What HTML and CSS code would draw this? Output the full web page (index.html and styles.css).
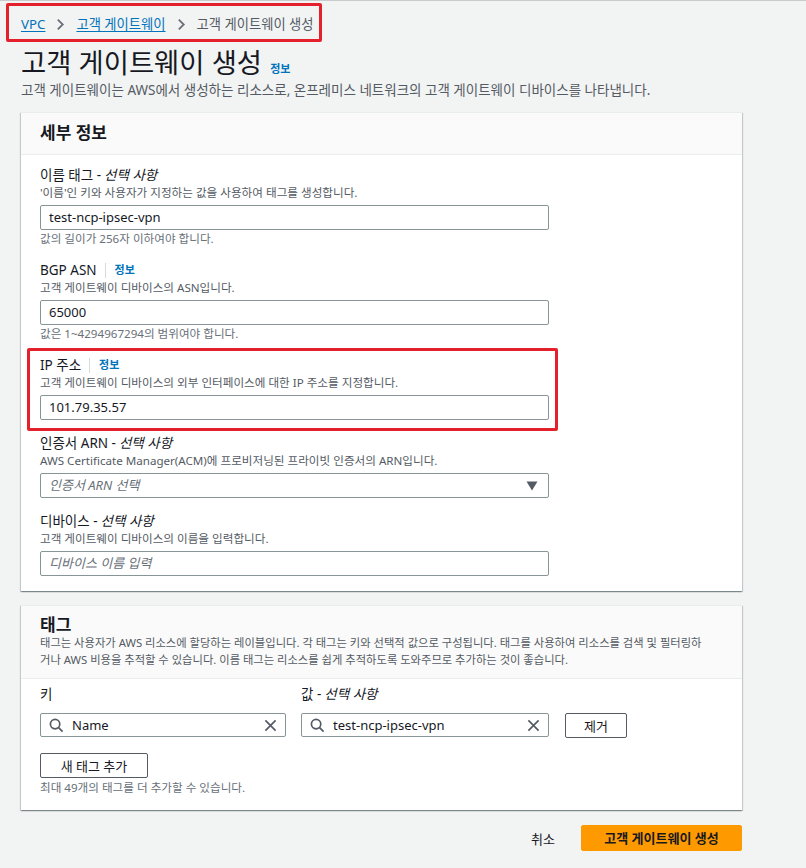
FILE: index.html
```html
<!DOCTYPE html>
<html lang="ko">
<head>
<meta charset="utf-8">
<title>고객 게이트웨이 생성</title>
<link rel="stylesheet" href="styles.css">
</head>
<body>
<div class="page">
  <nav class="crumbs">
    <a class="crumb-link" href="#">VPC</a>
    <svg class="chev" viewBox="0 0 10 14" width="9" height="13"><path d="M2 1.5 L7.5 7 L2 12.5" fill="none" stroke="#687078" stroke-width="2"/></svg>
    <a class="crumb-link" href="#">고객 게이트웨이</a>
    <svg class="chev" viewBox="0 0 10 14" width="9" height="13"><path d="M2 1.5 L7.5 7 L2 12.5" fill="none" stroke="#687078" stroke-width="2"/></svg>
    <span class="crumb-current">고객 게이트웨이 생성</span>
  </nav>

  <h1 class="title">고객 게이트웨이 생성 <a class="info" href="#">정보</a></h1>
  <p class="lead">고객 게이트웨이는 AWS에서 생성하는 리소스로, 온프레미스 네트워크의 고객 게이트웨이 디바이스를 나타냅니다.</p>

  <section class="panel">
    <div class="panel-head">
      <h2 class="panel-title">세부 정보</h2>
    </div>
    <div class="panel-body details">
      <div class="field">
        <div class="label">이름 태그 - <i>선택 사항</i></div>
        <div class="desc">'이름'인 키와 사용자가 지정하는 값을 사용하여 태그를 생성합니다.</div>
        <div class="input">test-ncp-ipsec-vpn</div>
        <div class="hint">값의 길이가 256자 이하여야 합니다.</div>
      </div>
      <div class="field">
        <div class="label">BGP ASN <span class="sep"></span><a class="info" href="#">정보</a></div>
        <div class="desc">고객 게이트웨이 디바이스의 ASN입니다.</div>
        <div class="input">65000</div>
        <div class="hint">값은 1~4294967294의 범위여야 합니다.</div>
      </div>
      <div class="field marked">
        <div class="label">IP 주소 <span class="sep"></span><a class="info" href="#">정보</a></div>
        <div class="desc">고객 게이트웨이 디바이스의 외부 인터페이스에 대한 IP 주소를 지정합니다.</div>
        <div class="input">101.79.35.57</div>
      </div>
      <div class="field">
        <div class="label">인증서 ARN - <i>선택 사항</i></div>
        <div class="desc">AWS Certificate Manager(ACM)에 프로비저닝된 프라이빗 인증서의 ARN입니다.</div>
        <div class="input select"><span class="placeholder">인증서 ARN 선택</span>
          <svg class="caret" viewBox="0 0 12 10" width="12" height="10"><path d="M0.5 0.5 H11.5 L6 9.5 Z" fill="#545b64"/></svg>
        </div>
      </div>
      <div class="field">
        <div class="label">디바이스 - <i>선택 사항</i></div>
        <div class="desc">고객 게이트웨이 디바이스의 이름을 입력합니다.</div>
        <div class="input"><span class="placeholder">디바이스 이름 입력</span></div>
      </div>
    </div>
  </section>

  <section class="panel tags">
    <div class="panel-head">
      <h2 class="panel-title small">태그</h2>
      <p class="panel-desc">태그는 사용자가 AWS 리소스에 할당하는 레이블입니다. 각 태그는 키와 선택적 값으로 구성됩니다. 태그를 사용하여 리소스를 검색 및 필터링하<br>거나 AWS 비용을 추적할 수 있습니다. 이름 태그는 리소스를 쉽게 추적하도록 도와주므로 추가하는 것이 좋습니다.</p>
    </div>
    <div class="panel-body">
      <div class="tag-row">
        <div class="tag-col key">
          <div class="label">키</div>
          <div class="input search">
            <svg class="ico" viewBox="0 0 16 16" width="15" height="15"><circle cx="6.5" cy="6.5" r="5" fill="none" stroke="#545b64" stroke-width="1.8"/><path d="M10.2 10.2 L14.5 14.5" stroke="#545b64" stroke-width="1.8"/></svg>
            <span class="val">Name</span>
            <svg class="clear" viewBox="0 0 14 14" width="13" height="13"><path d="M1.5 1.5 L12.5 12.5 M12.5 1.5 L1.5 12.5" stroke="#545b64" stroke-width="1.8"/></svg>
          </div>
        </div>
        <div class="tag-col value">
          <div class="label">값 - <i>선택 사항</i></div>
          <div class="input search">
            <svg class="ico" viewBox="0 0 16 16" width="15" height="15"><circle cx="6.5" cy="6.5" r="5" fill="none" stroke="#545b64" stroke-width="1.8"/><path d="M10.2 10.2 L14.5 14.5" stroke="#545b64" stroke-width="1.8"/></svg>
            <span class="val">test-ncp-ipsec-vpn</span>
            <svg class="clear" viewBox="0 0 14 14" width="13" height="13"><path d="M1.5 1.5 L12.5 12.5 M12.5 1.5 L1.5 12.5" stroke="#545b64" stroke-width="1.8"/></svg>
          </div>
        </div>
        <button class="btn remove">제거</button>
      </div>
      <button class="btn add">새 태그 추가</button>
      <div class="hint note">최대 49개의 태그를 더 추가할 수 있습니다.</div>
    </div>
  </section>

  <div class="actions">
    <a class="cancel" href="#">취소</a>
    <button class="btn primary">고객 게이트웨이 생성</button>
  </div>
</div>
</body>
</html>
```

FILE: styles.css
```css
html, body {
  margin: 0;
  padding: 0;
  background: #f2f3f3;
}
body {
  font-family: "Noto Sans", "Noto Sans CJK KR", sans-serif;
  color: #16191f;
  border-top: 1px solid #c9cbcc;
}
.page {
  width: 721px;
  margin-left: 21px;
}
.crumbs {
  position: relative;
  display: flex;
  align-items: center;
  gap: 11px;
  height: 18px;
  padding-top: 14px;
  font-size: 13.3px;
  line-height: 18px;
}
.crumbs::after {
  content: "";
  position: absolute;
  left: -15px;
  top: 2px;
  width: 310px;
  height: 33px;
  border: 3px solid #e3202b;
  border-radius: 2px;
}
.crumb-link {
  color: #0073bb;
  text-decoration: underline;
  text-underline-offset: 2px;
}
.crumb-current {
  color: #545b64;
}
.chev { display: block; }
.title {
  margin: 14px 0 0;
  font-size: 27.4px;
  line-height: 32px;
  font-weight: 400;
  color: #16191f;
}
.title .info {
  font-size: 11px;
  line-height: 16px;
  margin-left: 1px;
}
.info {
  color: #0073bb;
  font-weight: 700;
  text-decoration: none;
  font-size: 11px;
}
.lead {
  margin: 2px 0 0;
  font-size: 13.5px;
  line-height: 18px;
  color: #545b64;
}
.panel {
  margin-top: 13px;
  background: #fff;
  border-top: 1px solid #eaeded;
  box-shadow: 0 1px 1px 0 rgba(0, 28, 36, 0.3), 1px 1px 1px 0 rgba(0, 28, 36, 0.15), -1px 1px 1px 0 rgba(0, 28, 36, 0.15);
}
.panel-head {
  background: #fafafa;
  border-bottom: 1px solid #eaeded;
  padding: 8px 19px 10px;
}
.panel-title {
  margin: 0;
  font-size: 17px;
  line-height: 23px;
  font-weight: 700;
}
.panel-title.small {
  line-height: 19px;
}
.panel-desc {
  margin: 0;
  font-size: 11.3px;
  line-height: 17px;
  color: #545b64;
  white-space: nowrap;
}
.panel-body {
  padding: 11px 19px 15px;
}
.field {
  width: 509px;
  margin-top: 14px;
}
.field:first-child { margin-top: 0; }
.field.marked { position: relative; }
.field.marked::after {
  content: "";
  position: absolute;
  left: -13px;
  top: -8px;
  right: -9px;
  bottom: -11px;
  border: 3px solid #e3202b;
  border-radius: 2px;
}
.label {
  font-size: 13.5px;
  line-height: 18px;
  display: flex;
  align-items: center;
}
.label i { font-style: italic; margin-left: 3px; }
.sep {
  display: inline-block;
  width: 1px;
  height: 15px;
  background: #d5dbdb;
  margin: 0 9px 0 8px;
}
.desc {
  margin-top: 1px;
  font-size: 11.6px;
  line-height: 16px;
  color: #545b64;
}
.input {
  box-sizing: border-box;
  margin-top: 4px;
  height: 25px;
  border: 1px solid #879596;
  border-radius: 2px;
  padding: 0 8px;
  font-size: 13px;
  line-height: 23px;
  color: #16191f;
  display: flex;
  align-items: center;
  background: #fff;
}
.hint {
  margin-top: 1px;
  font-size: 11.6px;
  line-height: 16px;
  color: #687078;
}
.placeholder {
  color: #687078;
  font-style: italic;
}
.select { justify-content: space-between; padding-right: 10px; }
.caret { display: block; }

.tags { margin-top: 14px; }
.tags .panel-head { padding: 9px 19px 10px; }
.tags .panel-body { padding: 6px 19px 14px; }
.tag-row {
  display: flex;
  align-items: flex-end;
}
.tag-col.key { width: 246px; }
.tag-col.value { width: 248px; margin-left: 15px; }
.tag-col .input { margin-top: 10px; height: 24px; padding: 0 8px; }
.tag-col .label { line-height: 18px; }
.ico { display: block; flex: none; }
.val { flex: 1; margin-left: 8px; }
.clear { display: block; flex: none; }
.btn {
  box-sizing: border-box;
  font-family: "Noto Sans", "Noto Sans CJK KR", sans-serif;
  font-size: 13px;
  line-height: 18px;
  background: #fff;
  border: 1px solid #545b64;
  border-radius: 2px;
  color: #16191f;
  padding: 0;
  cursor: pointer;
}
.remove {
  width: 62px;
  height: 25px;
  margin-left: 16px;
  margin-bottom: -1px;
}
.add {
  display: block;
  width: 108px;
  height: 25px;
  margin-top: 16px;
}
.note { margin-top: 2px; }
.actions {
  display: flex;
  justify-content: flex-end;
  align-items: center;
  margin-top: 15px;
}
.cancel {
  font-size: 13px;
  color: #16191f;
  text-decoration: none;
  margin-right: 26px;
}
.primary {
  width: 161px;
  height: 26px;
  background: #ff9900;
  border-color: #ff9900;
  font-weight: 700;
  color: #16191f;
}
```
